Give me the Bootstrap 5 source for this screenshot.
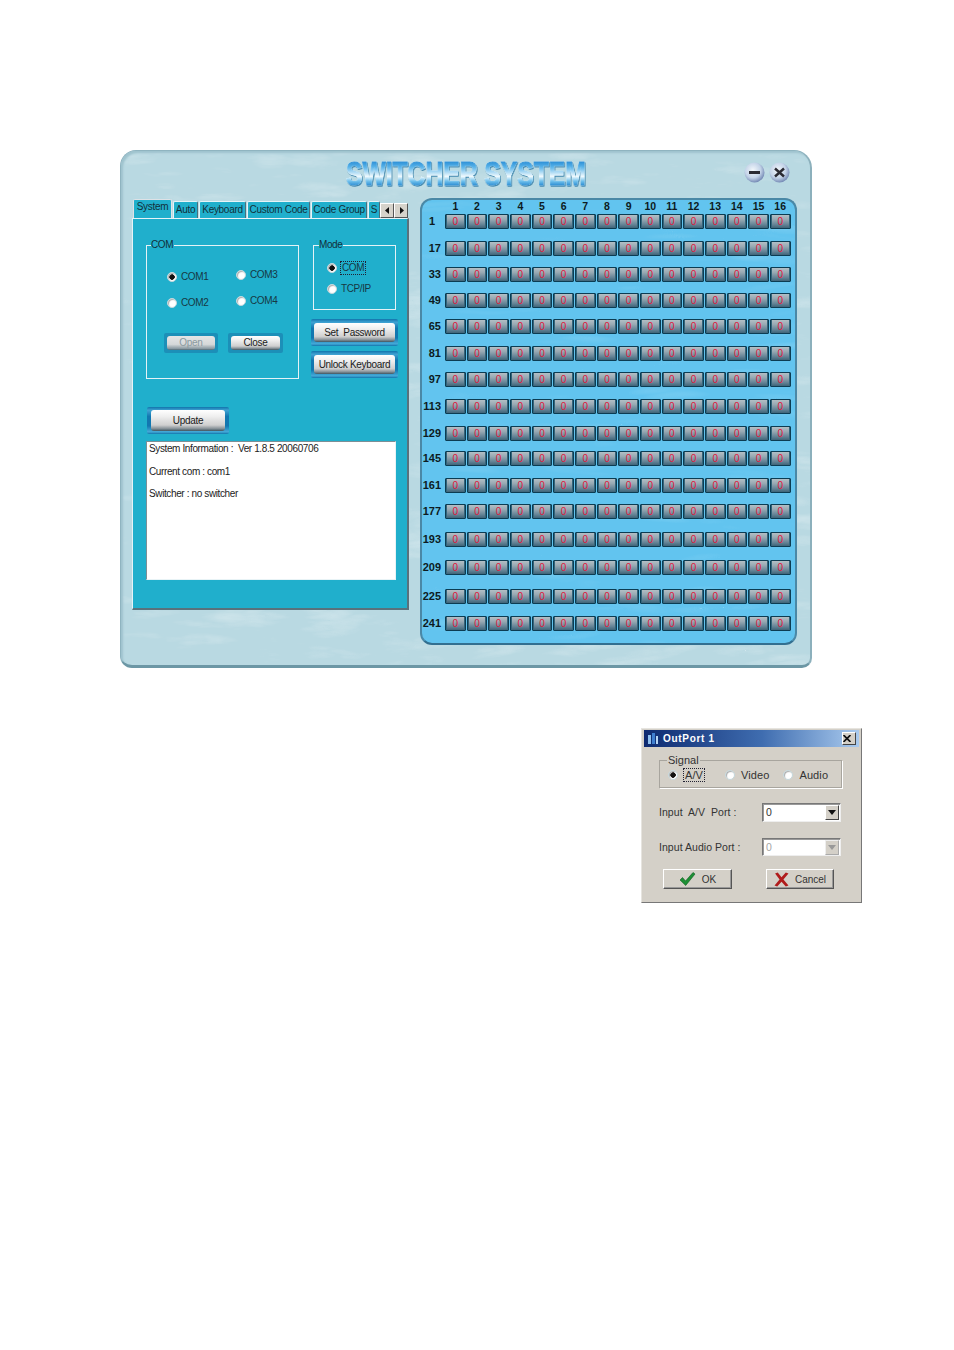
<!DOCTYPE html>
<html lang="en">
<head>
<meta charset="utf-8">
<title>Switcher System</title>
<link rel="stylesheet" href="https://cdn.jsdelivr.net/npm/bootstrap@5.3.0/dist/css/bootstrap.min.css">
<style>
body{background:#fff;font-family:"Liberation Sans",Arial,sans-serif;font-size:10px;color:#12303a;line-height:1.2}
.sheet{padding:150px 0 0 120px;width:954px;height:1350px;overflow:hidden}
.appwin{width:692px;height:518px;padding:0 13px 0 11px;border:1px solid #8fb4c0;border-right:2px solid #8cb0bc;border-bottom:3px solid #6c97a5;border-radius:16px 18px 10px 12px;background-color:#b9d9e2;background-image:url("data:image/svg+xml,%3Csvg xmlns='http://www.w3.org/2000/svg' width='692' height='518'%3E%3Cfilter id='n'%3E%3CfeTurbulence baseFrequency='.012 .05' numOctaves='4' seed='4'/%3E%3CfeColorMatrix values='0 0 0 0 1 0 0 0 0 1 0 0 0 0 1 1.2 0 0 0 -.4'/%3E%3C/filter%3E%3Crect width='692' height='518' filter='url(%23n)' opacity='.45'/%3E%3C/svg%3E");box-shadow:inset 2px 2px 2px #9fc3ce}
.headbar{height:47px;padding-left:214px}
.ttl{display:inline-block;width:240px;margin-top:5px;font-weight:700;font-size:34px;line-height:34px;white-space:nowrap}
.ttl span{display:inline-block;transform:scaleX(.725);transform-origin:0 50%;color:transparent;background:linear-gradient(#1f86d2 12%,#58b2e8 32%,#f0fafe 60%,#6fc0ec 74%,#1a7fcc 90%);-webkit-background-clip:text;background-clip:text;-webkit-text-stroke:1px transparent;filter:drop-shadow(0 0 .6px #f4fbfe) drop-shadow(1px 1px 0 #3f86ad)}
.winbtns{gap:4px;margin:0 7px 0 auto;padding-top:11px}
.winbtns svg{display:block}
.mainrow{gap:11px}
.leftcol{width:277px;padding-top:2px}
.tabstrip{height:18px;border:0;flex-wrap:nowrap;position:relative}
.tabstrip .nav-link{height:17px;margin:1px 0 0 1px;padding:2px 0 0;border:0;border-top:1px solid #e6f3f7;border-left:1px solid #e6f3f7;border-right:1px solid #49707c;border-radius:2px 2px 0 0;background:#20afcc;color:#12303a;font-size:10px;letter-spacing:-.3px;text-align:center;white-space:nowrap}
.tabstrip .nav-link.active{height:19px;margin-top:-1px;padding-top:1px;border-bottom:0;background:#20afcc;color:#12303a;position:relative;z-index:2}
.tw1{width:39px}.tw2{width:25px}.tw3{width:47px}.tw4{width:63px}.tw5{width:56px}.tw6{width:12px}
.tabarrows{margin-left:0;gap:0}
.tarr{width:14px;height:15px;margin-top:3px;background:#d6d3cb;border:1px solid;border-color:#fff #555 #555 #fff;color:#111;display:flex;align-items:center;justify-content:center}
.panelbody{height:392px;padding:28px 12px 0 13px;background:#20afcc;border-top:1px solid #e6f3f7;border-left:1px solid #e6f3f7;border-right:2px solid #59727c;border-bottom:2px solid #59727c}
fieldset.grp{border:1px solid #e4f2f6;padding:0}
fieldset.grp legend{float:none;width:auto;margin:0 0 0 4px;padding:0 1px 0 0;font-size:10px;letter-spacing:-.4px;line-height:10px;color:#12303a}
.grpcom{flex:none;width:153px;height:139px;margin-top:-7px}
.grpmode{width:83px;height:70px;margin:-7px 0 0 2px}
fieldset.grpmode legend{margin-left:5px}
.rgrid{display:grid;grid-template-columns:69px 60px;margin:21px 0 0 20px;row-gap:14px}
.rgrid label:nth-child(even){margin-top:-4px}
.opt{display:flex;align-items:center;gap:4px;font-size:10px;letter-spacing:-.4px;line-height:12px;color:#173843;margin:0}
.opt .form-check-input{width:10px;height:10px;margin:0;flex:none;border:1px solid #c4d7dc;background-color:#fff;box-shadow:inset 1px 1px 1px #aaa}
.opt .form-check-input:checked[type=radio]{background-color:#fff;border-color:#c4d7dc;background-image:radial-gradient(circle,#111 2.500px,transparent 3px)}
.frame{display:flex;padding:3px;border-radius:2px;background:linear-gradient(#1174ac,#3fa3d3 12%,#1277b0 35%,#1277b0 70%,#45aad8 92%,#1174ac)}
.gbtn{width:100%;height:100%;padding:0;border:0;border-radius:3px;font-size:10px;letter-spacing:-.3px;line-height:1;color:#1a1a1a;background:linear-gradient(#fff 0,#efefef 30%,#cfcfcf 72%,#8a949a 88%,#3f5560 100%)}
.gbtn:disabled{background:linear-gradient(#e6e6e6,#d5d8d9 60%,#8a9aa2 90%,#4d6672);color:#8b9aa0;opacity:1}
.fopen{width:54px;height:20px;background:#1c8fb8}
.fclose{width:55px;height:20px;background:#1c8fb8}
.btnrow{margin:24px 0 0 17px;gap:10px}
.rcol{flex:none;width:87px;margin-left:12px}
.modeopts{gap:9px;margin:12px 0 0 13px}
.focusln{outline:1px dotted #223;padding:0 1px}
.fside{width:87px;height:27px;margin-top:9px;padding:4px 3px}
.fside+.fside{margin-top:5px}
.fup{width:82px;height:27px;padding:3px 4px;margin:28px 0 0 1px}
.infobox{width:250px;height:139px;margin-top:7px;background:#fff;border:1px solid;border-color:#7c8f96 #e8f3f6 #e8f3f6 #7c8f96;padding:1px 2px;font-size:10px;letter-spacing:-.38px;line-height:12px;color:#222}
.infobox p{margin:0 0 10.500px}
.gridpanel{width:378px;height:447px;padding-top:1px;border:2px solid #4a88a6;border-bottom:2px solid #326f90;border-radius:12px;background-color:#62c4ef;background-image:url("data:image/svg+xml,%3Csvg xmlns='http://www.w3.org/2000/svg' width='378' height='447'%3E%3Cfilter id='m'%3E%3CfeTurbulence baseFrequency='.01 .06' numOctaves='2' seed='9'/%3E%3CfeColorMatrix values='0 0 0 0 1 0 0 0 0 1 0 0 0 0 1 1 0 0 0 -.4'/%3E%3C/filter%3E%3Crect width='378' height='447' filter='url(%23m)' opacity='.3'/%3E%3C/svg%3E")}
.mtx{display:grid;grid-template-columns:22px repeat(16,20.67px);column-gap:1px;grid-template-rows:13px 27px 26px 26px 26px 27px 26px 27px 27px 25px 27px 26px 28px 28px 29px 27px 15px;font-size:11px;line-height:13px;font-weight:700;color:#0d1b22}
.mtx em{font-style:normal;text-align:center;font-size:10.500px;line-height:11px}
.mtx strong{text-align:right;padding-right:3px;line-height:15px;font-weight:700;font-size:11px}
.mtx strong.lone{padding-right:9px}
.mtx span{display:block;height:15px;border:1px solid #0c3c52;border-radius:1px;background:linear-gradient(#b4bfc5,#97a9b3 35%,#668597 72%,#3f6478);box-shadow:inset 1px 0 0 #33657b,inset -1px 0 0 #33657b;color:#e0183c;font-weight:400;font-size:10px;line-height:13px;text-align:center}
.dlg{width:221px;height:175px;margin:60px 0 0 521px;padding:1px 2px 2px;background:#d4d0c8;border:1px solid;border-color:#e6e4df #777 #777 #e6e4df;color:#333;font-size:10.500px;line-height:13px}
.dlghead{height:17px;padding:0 3px 0 4px;background:linear-gradient(90deg,#0e2a70,#3f6db0 55%,#a9caee);color:#fff;font-weight:700;font-size:10px;letter-spacing:.7px}
.dlghead svg{margin-right:4px}
.xclose{width:14px;height:13px;background:#d4d0c8;border:1px solid;border-color:#fff #444 #444 #fff;display:flex;align-items:center;justify-content:center}
.sigbox{height:34px;width:183px;margin:7px 0 0 15px;border:1px solid #a8a59e!important;box-shadow:1px 1px 0 #fff}
fieldset.sigbox legend{float:none;width:auto;margin:0 0 0 7px;padding:0 1px;font-size:11px;letter-spacing:0;line-height:12px;color:#333}
.sigopts{margin:3px 0 0 8px}
.sigopts .opt{gap:6px;font-size:11px;color:#333;letter-spacing:.1px}
.sigopts .o2{margin-left:21px}.sigopts .o3{margin-left:14px}
.frow{margin:15px 0 0 15px}
.frow label{width:103px;margin:0;font-size:10.500px;letter-spacing:.05px;color:#333}
.frow+.frow{margin-top:16px}
.combo{width:79px;height:19px;background:#fff;border:1px solid;border-color:#777 #eee #eee #777;padding:2px 1px 0 3px;box-shadow:inset 1px 1px 0 #999}
.combo i{width:14px;height:15px;margin-top:-1px;background:#d4d0c8;border:1px solid;border-color:#fff #444 #444 #fff;display:flex;align-items:center;justify-content:center}
.combo.off{color:#a5a5a5;height:18px}
.combo.off i{border-color:#eee #aaa #aaa #eee}
.dbtnrow{margin:13px 0 0 19px}
.dbtn{width:69px;height:20px;padding:0;gap:6px;background:#d4d0c8;border:1px solid;border-color:#fff #555 #555 #fff;border-radius:0;font-size:10px;color:#333;box-shadow:inset -1px -1px 0 #999}
.dbtn+.dbtn{width:68px;margin-left:34px}
</style>
</head>
<body>
<div class="sheet">
  <div class="appwin">
    <div class="headbar d-flex align-items-start">
      <div class="ttl"><span>SWITCHER SYSTEM</span></div>
      <div class="winbtns d-flex">
        <svg width="21" height="21" viewBox="0 0 21 21"><defs><radialGradient id="g1" cx=".42" cy=".38" r=".65"><stop offset="0" stop-color="#f2f7fb"/><stop offset=".6" stop-color="#c3d3e8"/><stop offset="1" stop-color="#6d83b0"/></radialGradient></defs><circle cx="10.500" cy="10.500" r="10" fill="url(#g1)"/><rect x="5" y="9" width="11" height="3" fill="#2a2a33"/></svg>
        <svg width="21" height="21" viewBox="0 0 21 21"><circle cx="10.500" cy="10.500" r="10" fill="url(#g1)"/><path d="M6 6.500 15 14.500M15 6.500 6 14.500" stroke="#2a2a33" stroke-width="2.400" fill="none"/></svg>
      </div>
    </div>
    <div class="mainrow d-flex align-items-start">
      <div class="leftcol">
        <ul class="nav nav-tabs tabstrip">
          <li class="nav-item"><a class="nav-link active tw1" href="#">System</a></li>
          <li class="nav-item"><a class="nav-link tw2" href="#">Auto</a></li>
          <li class="nav-item"><a class="nav-link tw3" href="#">Keyboard</a></li>
          <li class="nav-item"><a class="nav-link tw4" href="#">Custom Code</a></li>
          <li class="nav-item"><a class="nav-link tw5" href="#">Code Group</a></li>
          <li class="nav-item"><a class="nav-link tw6" href="#">S</a></li>
          <li class="tabarrows d-flex">
            <div class="tarr"><svg width="5" height="7" viewBox="0 0 5 7"><path d="M4 0V7L0 3.500Z" fill="#111"/></svg></div>
            <div class="tarr"><svg width="5" height="7" viewBox="0 0 5 7"><path d="M1 0V7L5 3.500Z" fill="#111"/></svg></div>
          </li>
        </ul>
        <div class="panelbody">
          <div class="d-flex align-items-start">
            <fieldset class="grp grpcom">
              <legend>COM</legend>
              <div class="rgrid">
                <label class="opt"><input class="form-check-input" type="radio" name="c" checked>COM1</label>
                <label class="opt"><input class="form-check-input" type="radio" name="c">COM3</label>
                <label class="opt"><input class="form-check-input" type="radio" name="c">COM2</label>
                <label class="opt"><input class="form-check-input" type="radio" name="c">COM4</label>
              </div>
              <div class="btnrow d-flex">
                <div class="frame fopen"><button class="gbtn" disabled>Open</button></div>
                <div class="frame fclose"><button class="gbtn">Close</button></div>
              </div>
            </fieldset>
            <div class="rcol">
              <fieldset class="grp grpmode">
                <legend>Mode</legend>
                <div class="modeopts d-flex flex-column">
                  <label class="opt"><input class="form-check-input" type="radio" name="m" checked><span class="focusln">COM</span></label>
                  <label class="opt"><input class="form-check-input" type="radio" name="m">TCP/IP</label>
                </div>
              </fieldset>
              <div class="frame fside"><button class="gbtn">Set&nbsp; Password</button></div>
              <div class="frame fside"><button class="gbtn">Unlock Keyboard</button></div>
            </div>
          </div>
          <div class="frame fup"><button class="gbtn">Update</button></div>
          <div class="infobox">
            <p>System Information :&nbsp; Ver 1.8.5 20060706</p>
            <p>Current com : com1</p>
            <p>Switcher : no switcher</p>
          </div>
        </div>
      </div>
      <div class="gridpanel">
        <div class="mtx">
          <div></div><em>1</em><em>2</em><em>3</em><em>4</em><em>5</em><em>6</em><em>7</em><em>8</em><em>9</em><em>10</em><em>11</em><em>12</em><em>13</em><em>14</em><em>15</em><em>16</em>
          <strong class="lone">1</strong><span>0</span><span>0</span><span>0</span><span>0</span><span>0</span><span>0</span><span>0</span><span>0</span><span>0</span><span>0</span><span>0</span><span>0</span><span>0</span><span>0</span><span>0</span><span>0</span>
          <strong>17</strong><span>0</span><span>0</span><span>0</span><span>0</span><span>0</span><span>0</span><span>0</span><span>0</span><span>0</span><span>0</span><span>0</span><span>0</span><span>0</span><span>0</span><span>0</span><span>0</span>
          <strong>33</strong><span>0</span><span>0</span><span>0</span><span>0</span><span>0</span><span>0</span><span>0</span><span>0</span><span>0</span><span>0</span><span>0</span><span>0</span><span>0</span><span>0</span><span>0</span><span>0</span>
          <strong>49</strong><span>0</span><span>0</span><span>0</span><span>0</span><span>0</span><span>0</span><span>0</span><span>0</span><span>0</span><span>0</span><span>0</span><span>0</span><span>0</span><span>0</span><span>0</span><span>0</span>
          <strong>65</strong><span>0</span><span>0</span><span>0</span><span>0</span><span>0</span><span>0</span><span>0</span><span>0</span><span>0</span><span>0</span><span>0</span><span>0</span><span>0</span><span>0</span><span>0</span><span>0</span>
          <strong>81</strong><span>0</span><span>0</span><span>0</span><span>0</span><span>0</span><span>0</span><span>0</span><span>0</span><span>0</span><span>0</span><span>0</span><span>0</span><span>0</span><span>0</span><span>0</span><span>0</span>
          <strong>97</strong><span>0</span><span>0</span><span>0</span><span>0</span><span>0</span><span>0</span><span>0</span><span>0</span><span>0</span><span>0</span><span>0</span><span>0</span><span>0</span><span>0</span><span>0</span><span>0</span>
          <strong>113</strong><span>0</span><span>0</span><span>0</span><span>0</span><span>0</span><span>0</span><span>0</span><span>0</span><span>0</span><span>0</span><span>0</span><span>0</span><span>0</span><span>0</span><span>0</span><span>0</span>
          <strong>129</strong><span>0</span><span>0</span><span>0</span><span>0</span><span>0</span><span>0</span><span>0</span><span>0</span><span>0</span><span>0</span><span>0</span><span>0</span><span>0</span><span>0</span><span>0</span><span>0</span>
          <strong>145</strong><span>0</span><span>0</span><span>0</span><span>0</span><span>0</span><span>0</span><span>0</span><span>0</span><span>0</span><span>0</span><span>0</span><span>0</span><span>0</span><span>0</span><span>0</span><span>0</span>
          <strong>161</strong><span>0</span><span>0</span><span>0</span><span>0</span><span>0</span><span>0</span><span>0</span><span>0</span><span>0</span><span>0</span><span>0</span><span>0</span><span>0</span><span>0</span><span>0</span><span>0</span>
          <strong>177</strong><span>0</span><span>0</span><span>0</span><span>0</span><span>0</span><span>0</span><span>0</span><span>0</span><span>0</span><span>0</span><span>0</span><span>0</span><span>0</span><span>0</span><span>0</span><span>0</span>
          <strong>193</strong><span>0</span><span>0</span><span>0</span><span>0</span><span>0</span><span>0</span><span>0</span><span>0</span><span>0</span><span>0</span><span>0</span><span>0</span><span>0</span><span>0</span><span>0</span><span>0</span>
          <strong>209</strong><span>0</span><span>0</span><span>0</span><span>0</span><span>0</span><span>0</span><span>0</span><span>0</span><span>0</span><span>0</span><span>0</span><span>0</span><span>0</span><span>0</span><span>0</span><span>0</span>
          <strong>225</strong><span>0</span><span>0</span><span>0</span><span>0</span><span>0</span><span>0</span><span>0</span><span>0</span><span>0</span><span>0</span><span>0</span><span>0</span><span>0</span><span>0</span><span>0</span><span>0</span>
          <strong>241</strong><span>0</span><span>0</span><span>0</span><span>0</span><span>0</span><span>0</span><span>0</span><span>0</span><span>0</span><span>0</span><span>0</span><span>0</span><span>0</span><span>0</span><span>0</span><span>0</span>
        </div>
      </div>
    </div>
  </div>

  <div class="dlg">
    <div class="dlghead d-flex align-items-center">
      <svg width="11" height="12" viewBox="0 0 11 12"><rect x="0" y="2" width="3" height="9" fill="#8fc0ee"/><rect x="4" y="0" width="3" height="11" fill="#3f7fd0"/><rect x="8" y="3" width="2" height="8" fill="#b5d6f5"/></svg>
      <span>OutPort 1</span>
      <div class="xclose ms-auto"><svg width="8" height="7" viewBox="0 0 8 7"><path d="M0.500 0 7.500 7M7.500 0 0.500 7" stroke="#111" stroke-width="1.700"/></svg></div>
    </div>
    <fieldset class="grp sigbox">
      <legend>Signal</legend>
      <div class="sigopts d-flex align-items-center">
        <label class="opt"><input class="form-check-input" type="radio" name="s" checked><span class="focusln">A/V</span></label>
        <label class="opt o2"><input class="form-check-input" type="radio" name="s">Video</label>
        <label class="opt o3"><input class="form-check-input" type="radio" name="s">Audio</label>
      </div>
    </fieldset>
    <div class="frow d-flex align-items-center">
      <label>Input&nbsp; A/V&nbsp; Port :</label>
      <div class="combo d-flex justify-content-between"><span>0</span><i><svg width="8" height="5" viewBox="0 0 8 5"><path d="M0 0H8L4 5Z" fill="#111"/></svg></i></div>
    </div>
    <div class="frow d-flex align-items-center">
      <label>Input Audio Port :</label>
      <div class="combo off d-flex justify-content-between"><span>0</span><i><svg width="8" height="5" viewBox="0 0 8 5"><path d="M0 0H8L4 5Z" fill="#999"/></svg></i></div>
    </div>
    <div class="dbtnrow d-flex">
      <button class="btn dbtn d-flex align-items-center justify-content-center"><svg width="17" height="14" viewBox="0 0 16 14"><path d="M0.500 8 3 5.500 6 9 13.500 0.500 15.500 2 6.200 13.500Z" fill="#1d8f35" stroke="#0f5f20" stroke-width=".6"/></svg>OK</button>
      <button class="btn dbtn d-flex align-items-center justify-content-center"><svg width="15" height="15" viewBox="0 0 14 14"><path d="M1 1.500 3.500 0.500 7 5 11 0.500 13.500 1.500 8.800 7 13.500 12.500 11 13.500 7 9 3 13.500 0.500 12.500 5.200 7Z" fill="#b01c1c"/></svg>Cancel</button>
    </div>
  </div>
</div>
<script src="https://cdn.jsdelivr.net/npm/bootstrap@5.3.0/dist/js/bootstrap.bundle.min.js"></script>
</body>
</html>
